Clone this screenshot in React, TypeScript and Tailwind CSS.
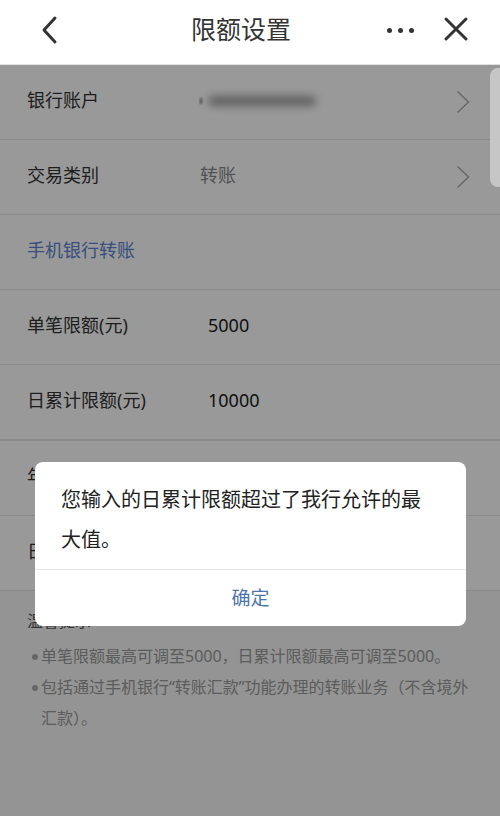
const font = { fontFamily: '"Noto Sans", "Noto Sans CJK SC", sans-serif' };

function Arrow() {
  return (
    <svg width="14" height="24" viewBox="0 0 14 24" className="mr-[3px]">
      <path d="M1.5 1.5 L12.5 12 L1.5 22.5" fill="none" stroke="#aaa" strokeWidth="1.4" />
    </svg>
  );
}

function Row({ label, value, arrow, numeric }: { label: string; value?: React.ReactNode; arrow?: boolean; numeric?: boolean }) {
  return (
    <div className="h-[75px] flex items-center px-[27px] border-b border-[#e4e4e4] bg-white">
      <div className={`${numeric ? 'w-[181px]' : 'w-[173px]'} text-[18px] text-[#333] -mt-[3px]`}>{label}</div>
      <div className="flex-1 text-[18px] -mt-[3px]">{value}</div>
      {arrow && <Arrow />}
    </div>
  );
}

export default function App() {
  return (
    <div className="relative w-[500px] h-[816px] overflow-hidden bg-[#f7f7f7]" style={font}>
      {/* header */}
      <header className="relative h-[65px] bg-white border-b border-[#e0e0e0] flex items-center justify-center pr-[18px]">
        <svg className="absolute left-[38px] top-[14px]" width="24" height="32" viewBox="0 0 24 32">
          <path d="M17 4 L6 16 L17 28" fill="none" stroke="#333" strokeWidth="3" strokeLinecap="round" strokeLinejoin="round" />
        </svg>
        <h1 className="text-[25px] text-[#333] -mt-[4px]">限额设置</h1>
        <div className="absolute left-[387px] top-[28px] flex gap-[6px]">
          <span className="w-[5px] h-[5px] rounded-full bg-[#333]" />
          <span className="w-[5px] h-[5px] rounded-full bg-[#333]" />
          <span className="w-[5px] h-[5px] rounded-full bg-[#333]" />
        </div>
        <svg className="absolute left-[443px] top-[16px]" width="26" height="26" viewBox="0 0 26 26">
          <path d="M3 3 L23 23 M23 3 L3 23" stroke="#333" strokeWidth="3" strokeLinecap="round" />
        </svg>
      </header>

      <Row
        label="银行账户"
        arrow
        value={
          <div className="flex items-center gap-[6px]">
            <span className="w-[2px] h-[6px] bg-[#777] blur-[1px]" />
            <span className="w-[108px] h-[10px] bg-[#777] rounded-full blur-[4px] opacity-70" />
          </div>
        }
      />
      <Row label="交易类别" arrow value={<span className="text-[#888]">转账</span>} />
      <div className="h-[75px] flex items-center px-[27px] border-b border-[#e4e4e4] bg-white">
        <span className="text-[18px] text-[#5b84d2] -mt-[3px]">手机银行转账</span>
      </div>
      <Row label="单笔限额(元)" numeric value={<span className="text-[#1a1a1a]">5000</span>} />
      <Row label="日累计限额(元)" numeric value={<span className="text-[#1a1a1a]">10000</span>} />
      <div className="border-t border-[#e4e4e4]" />
      <Row label="年累计限额(元)" numeric value={<span className="text-[#1a1a1a]">100000</span>} />
      <Row label="日累计笔数" numeric value={<span className="text-[#1a1a1a]">20</span>} />

      {/* tips */}
      <div className="px-[27px] pt-[18px]">
        <div className="text-[16px] text-[#555]">温馨提示</div>
        <ul className="mt-[8px] text-[16px] leading-[31px] text-[#999]">
          <li className="flex">
            <span className="w-[14px] shrink-0 flex items-center h-[31px]">
              <span className="ml-[5px] w-[6px] h-[6px] rounded-full bg-[#aaa]" />
            </span>
            <span>单笔限额最高可调至5000，日累计限额最高可调至5000。</span>
          </li>
          <li className="flex">
            <span className="w-[14px] shrink-0 flex items-center h-[31px]">
              <span className="ml-[5px] w-[6px] h-[6px] rounded-full bg-[#aaa]" />
            </span>
            <span>包括通过手机银行“转账汇款”功能办理的转账业务（不含境外汇款）。</span>
          </li>
        </ul>
      </div>

      {/* dim overlay */}
      <div className="absolute left-0 right-0 top-[65px] bottom-0 bg-black/40" />

      {/* scroll hint */}
      <div className="absolute right-0 top-[68px] w-[10px] h-[119px] rounded-l-[8px] bg-[#c6c6c6]" />

      {/* dialog */}
      <div className="absolute left-[35px] top-[462px] w-[431px] rounded-[8px] bg-white overflow-hidden">
        <p className="pl-[26px] pr-[30px] pt-[18px] pb-[9px] text-[20px] leading-[40px] text-[#222]">
          您输入的日累计限额超过了我行允许的最大值。
        </p>
        <div className="h-[57px] border-t border-[#e8e8e8] flex items-center justify-center text-[19px] text-[#4d75aa]">
          确定
        </div>
      </div>
    </div>
  );
}
